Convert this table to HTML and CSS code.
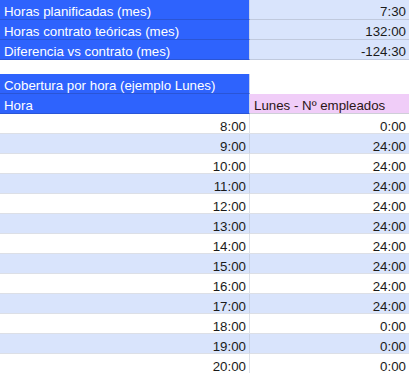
FILE: index.html
```html
<!DOCTYPE html>
<html>
<head>
<meta charset="utf-8">
<link rel="stylesheet" href="styles.css">
</head>
<body>
<div class="sheet">
  <div class="row">
    <div class="c1 blue">Horas planificadas (mes)</div>
    <div class="c2 light num">7:30</div>
  </div>
  <div class="row">
    <div class="c1 blue">Horas contrato teóricas (mes)</div>
    <div class="c2 light num">132:00</div>
  </div>
  <div class="row">
    <div class="c1 blue">Diferencia vs contrato (mes)</div>
    <div class="c2 light num">-124:30</div>
  </div>
  <div class="spacer"></div>
  <div class="row">
    <div class="c1 blue">Cobertura por hora (ejemplo Lunes)</div>
    <div class="c2 plain"></div>
  </div>
  <div class="row">
    <div class="c1 blue">Hora</div>
    <div class="c2 pink">Lunes - Nº empleados</div>
  </div>
  <div class="row data"><div class="c1 num">8:00</div><div class="c2 num">0:00</div></div>
  <div class="row data alt"><div class="c1 num">9:00</div><div class="c2 num">24:00</div></div>
  <div class="row data"><div class="c1 num">10:00</div><div class="c2 num">24:00</div></div>
  <div class="row data alt"><div class="c1 num">11:00</div><div class="c2 num">24:00</div></div>
  <div class="row data"><div class="c1 num">12:00</div><div class="c2 num">24:00</div></div>
  <div class="row data alt"><div class="c1 num">13:00</div><div class="c2 num">24:00</div></div>
  <div class="row data"><div class="c1 num">14:00</div><div class="c2 num">24:00</div></div>
  <div class="row data alt"><div class="c1 num">15:00</div><div class="c2 num">24:00</div></div>
  <div class="row data"><div class="c1 num">16:00</div><div class="c2 num">24:00</div></div>
  <div class="row data alt"><div class="c1 num">17:00</div><div class="c2 num">24:00</div></div>
  <div class="row data"><div class="c1 num">18:00</div><div class="c2 num">0:00</div></div>
  <div class="row data alt"><div class="c1 num">19:00</div><div class="c2 num">0:00</div></div>
  <div class="row data"><div class="c1 num">20:00</div><div class="c2 num">0:00</div></div>
</div>
</body>
</html>
```
FILE: styles.css
```css
html, body {
  margin: 0;
  padding: 0;
  background: #ffffff;
}
.sheet {
  width: 409px;
  font-family: "Liberation Sans", Arial, sans-serif;
  font-size: 13.3px;
  color: #1a1a1a;
}
.row {
  display: flex;
  height: 20px;
}
.c1, .c2 {
  box-sizing: border-box;
  height: 20px;
  line-height: 19px;
  padding: 2px 4px 0 4px;
  white-space: nowrap;
  overflow: hidden;
}
.c1 {
  width: 250px;
  border-right: 1px solid #d4d9e4;
}
.c2 {
  flex: 1;
}
.num {
  text-align: right;
  padding-right: 3px;
}
.blue {
  background: #2e63fd;
  color: #ffffff;
  border-bottom: 1px solid #2a55d6;
  border-right: 1px solid #c9d2ec;
}
.light {
  background: #d9e4fc;
  border-bottom: 1px solid #c0c9dd;
}
.plain {
  background: #ffffff;
}
.pink {
  background: #f0cdf8;
  color: #2b1616;
  border-bottom: 1px solid #cfcfd8;
}
.spacer {
  height: 14px;
}
.data .c1, .data .c2 {
  padding-top: 3px;
  border-bottom: 1px solid #dcdfe6;
}
.data .c1 {
  border-right: 1px solid #dfe2e8;
}
.data.alt .c1, .data.alt .c2 {
  background: #d9e4fc;
}
.data.alt {
  box-shadow: 0 -1px 0 #c3cbde;
}
.data.alt .c1 {
  border-right-color: #c8d1e4;
}
```
